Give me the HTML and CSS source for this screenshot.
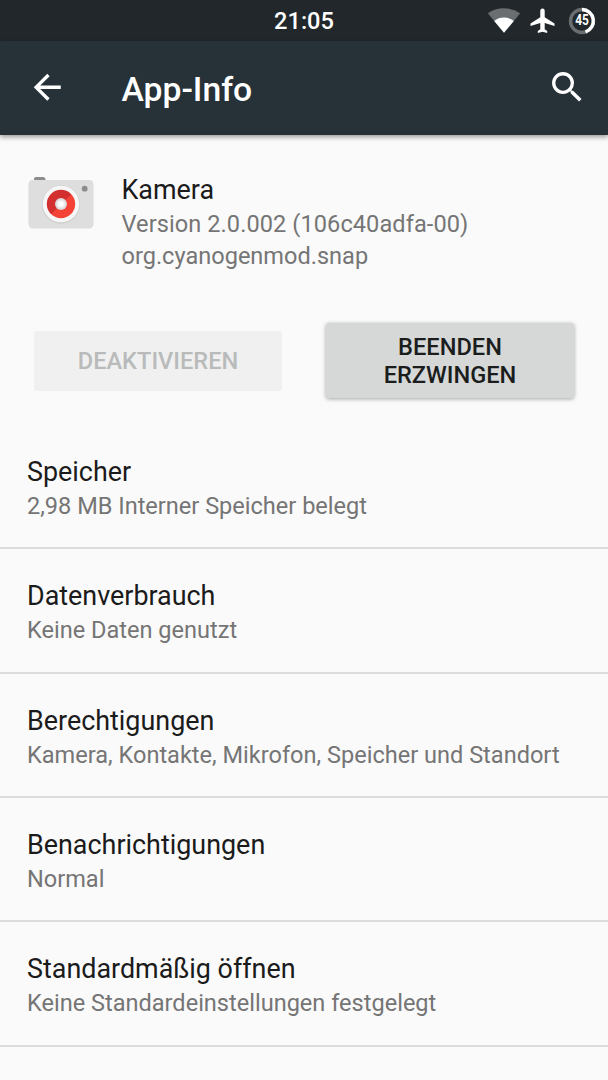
FILE: index.html
```html
<!DOCTYPE html>
<html lang="de">
<head>
  <meta charset="UTF-8">
  <meta name="viewport" content="width=device-width, initial-scale=1.0">
  <title>App-Info</title>
  <link rel="stylesheet" href="styles.css">
</head>
<body>
  <!-- Status bar -->
  <div class="status-bar">
    <span class="clock">21:05</span>
    <div class="status-icons">
      <svg class="wifi" width="34" height="26" viewBox="0 0 34 26">
        <path d="M0.8 5.2Q8 0.2 17 0.2T33.2 5.2L17 24.800z" fill="#6b6e70"></path>
        <path d="M7.2 13Q11.5 9.600 17 9.600T26.800 13L17 24.800z" fill="#fff"></path>
      </svg>
      <svg class="airplane" width="25" height="26" viewBox="0 0 25 26">
        <path d="M24.5 18v-2.6L14.7 9.2V2.8a2.2 2.2 0 0 0-4.4 0v6.4L0.5 15.4V18l9.8-3.1v6.3L7.8 23.1V25l4.7-1.2L17.2 25v-1.9l-2.5-1.9v-6.3z" fill="#fff"></path>
      </svg>
      <div class="battery">
        <svg width="28" height="28" viewBox="0 0 28 28">
          <circle cx="14" cy="14" r="11.5" fill="none" stroke="#6b6e70" stroke-width="3.4"></circle>
          <path d="M14 2.5a11.5 11.5 0 0 1 3.5 22.4" fill="none" stroke="#fff" stroke-width="3.4"></path>
        </svg>
        <span class="battery-level">45</span>
      </div>
    </div>
  </div>

  <!-- Toolbar -->
  <header class="toolbar">
    <svg class="icon" viewBox="0 0 24 24">
      <path d="M20 11H7.83l5.59-5.59L12 4l-8 8 8 8 1.41-1.41L7.83 13H20v-2z"></path>
    </svg>
    <h1>App-Info</h1>
    <svg class="icon" viewBox="0 0 24 24">
      <path d="M15.5 14h-.79l-.28-.27A6.47 6.47 0 0 0 16 9.5 6.5 6.5 0 1 0 9.5 16c1.61 0 3.09-.59 4.23-1.57l.27.28v.79l5 4.99L20.49 19l-4.99-5zm-6 0C7.01 14 5 11.99 5 9.5S7.01 5 9.5 5 14 7.01 14 9.5 11.99 14 9.5 14z"></path>
    </svg>
  </header>

  <main>
    <section class="app">
      <svg class="app-icon" width="68" height="58" viewBox="0 0 68 58">
        <defs>
          <linearGradient id="lens" x1="0" y1="0" x2="1" y2="1">
            <stop offset="50%" stop-color="#d32f2f"></stop>
            <stop offset="50%" stop-color="#f44336"></stop>
          </linearGradient>
          <radialGradient id="glass">
            <stop offset="30%" stop-color="#fff"></stop>
            <stop offset="100%" stop-color="#d2d2d2"></stop>
          </radialGradient>
        </defs>
        <path d="M7 8V6q0-2 2-2h7q2 0 2.5 2v2z" fill="#8c8c8c"></path>
        <rect x="1.5" y="7" width="65" height="48.5" rx="4.5" fill="#ccc" opacity="0.6"></rect>
        <rect x="2" y="7" width="64" height="47" rx="4" fill="#dedede"></rect>
        <circle cx="34" cy="31.5" r="19.2" fill="#cfcfcf"></circle>
        <circle cx="34" cy="31" r="18.3" fill="#f6f6f6"></circle>
        <circle cx="34" cy="31" r="14.2" fill="url(#lens)"></circle>
        <circle cx="34" cy="31" r="6" fill="url(#glass)"></circle>
        <circle cx="57.7" cy="15.7" r="2.9" fill="#8c8c8c"></circle>
      </svg>
      <div class="app-text">
        <h2>Kamera</h2>
        <p class="version">Version 2.0.002 (106c40adfa-00)</p>
        <p>org.cyanogenmod.snap</p>
      </div>
    </section>

    <div class="buttons">
      <button class="btn" disabled>DEAKTIVIEREN</button>
      <button class="btn btn-active">BEENDEN<br>ERZWINGEN</button>
    </div>

    <div class="list">
      <div class="item">
        <h2>Speicher</h2>
        <p>2,98 MB Interner Speicher belegt</p>
      </div>
      <div class="item">
        <h2>Datenverbrauch</h2>
        <p>Keine Daten genutzt</p>
      </div>
      <div class="item">
        <h2>Berechtigungen</h2>
        <p>Kamera, Kontakte, Mikrofon, Speicher und Standort</p>
      </div>
      <div class="item">
        <h2>Benachrichtigungen</h2>
        <p>Normal</p>
      </div>
      <div class="item">
        <h2>Standardmäßig öffnen</h2>
        <p>Keine Standardeinstellungen festgelegt</p>
      </div>
    </div>
  </main>
</body>
</html>
```
FILE: styles.css
```css
* {
  box-sizing: border-box;
}
body {
  font-family: Roboto, sans-serif;
  margin: 0;
  height: 1080px;
  overflow: hidden;
  background: #fafafa;
  color: #1b1b1b;
}
h1, h2, p {
  margin: 0;
}
.status-bar {
  display: grid;
  grid-template-columns: 1fr auto 1fr;
  align-items: center;
  height: 41px;
  padding: 0 12px;
  background: #21272b;
  color: white;
}
.clock {
  grid-column: 2;
  font-size: 23.6px;
  font-weight: 500;
  line-height: 28px;
}
.status-icons {
  display: flex;
  justify-content: flex-end;
  align-items: center;
  gap: 9px;
}
.airplane {
  margin-right: 4px;
}
.battery {
  position: relative;
  width: 28px;
  height: 28px;
}
.battery svg {
  display: block;
}
.battery-level {
  position: absolute;
  top: 0;
  left: 0;
  width: 28px;
  font-size: 14.5px;
  font-weight: bold;
  line-height: 28px;
  text-align: center;
  transform: scaleX(0.82);
}
.toolbar {
  display: flex;
  align-items: center;
  height: 94px;
  padding: 0 21px 1px 27px;
  background: #263238;
  color: white;
  box-shadow: 0 2px 5px rgba(0, 0, 0, 0.4);
}
.toolbar h1 {
  flex: 1;
  margin-left: 54px;
  padding-top: 4px;
  font-size: 33.7px;
  font-weight: 500;
  line-height: 40px;
}
.icon {
  width: 40.5px;
  height: 40.5px;
  fill: white;
}
h2 {
  font-size: 26.9px;
  font-weight: 400;
  line-height: 32px;
}
p {
  font-size: 23.55px;
  line-height: 28px;
  color: #757575;
}
.app {
  display: flex;
  gap: 26.5px;
  padding: 38px 27px 0;
}
.app-text {
  padding-top: 1px;
}
.app-text p {
  margin-top: 4px;
}
.app-text .version {
  letter-spacing: 0.08px;
}
.buttons {
  display: flex;
  justify-content: space-between;
  align-items: center;
  height: 75px;
  margin: 53px 34px 0;
}
.btn {
  width: 248px;
  height: 60px;
  border: none;
  border-radius: 3px;
  background: #f0f0f0;
  color: #b9bbbb;
  font-family: inherit;
  font-size: 23.6px;
  font-weight: 500;
  line-height: 28px;
}
.btn-active {
  height: 75px;
  background: #d6d8d7;
  color: #1b1d1d;
  box-shadow: 0 1px 4px rgba(0, 0, 0, 0.35);
}
.list {
  margin-top: 27px;
}
.item {
  height: 124.35px;
  padding: 31px 27px 0;
  border-bottom: 2px solid #dcdcdc;
}
.item p {
  margin-top: 4px;
}
```
